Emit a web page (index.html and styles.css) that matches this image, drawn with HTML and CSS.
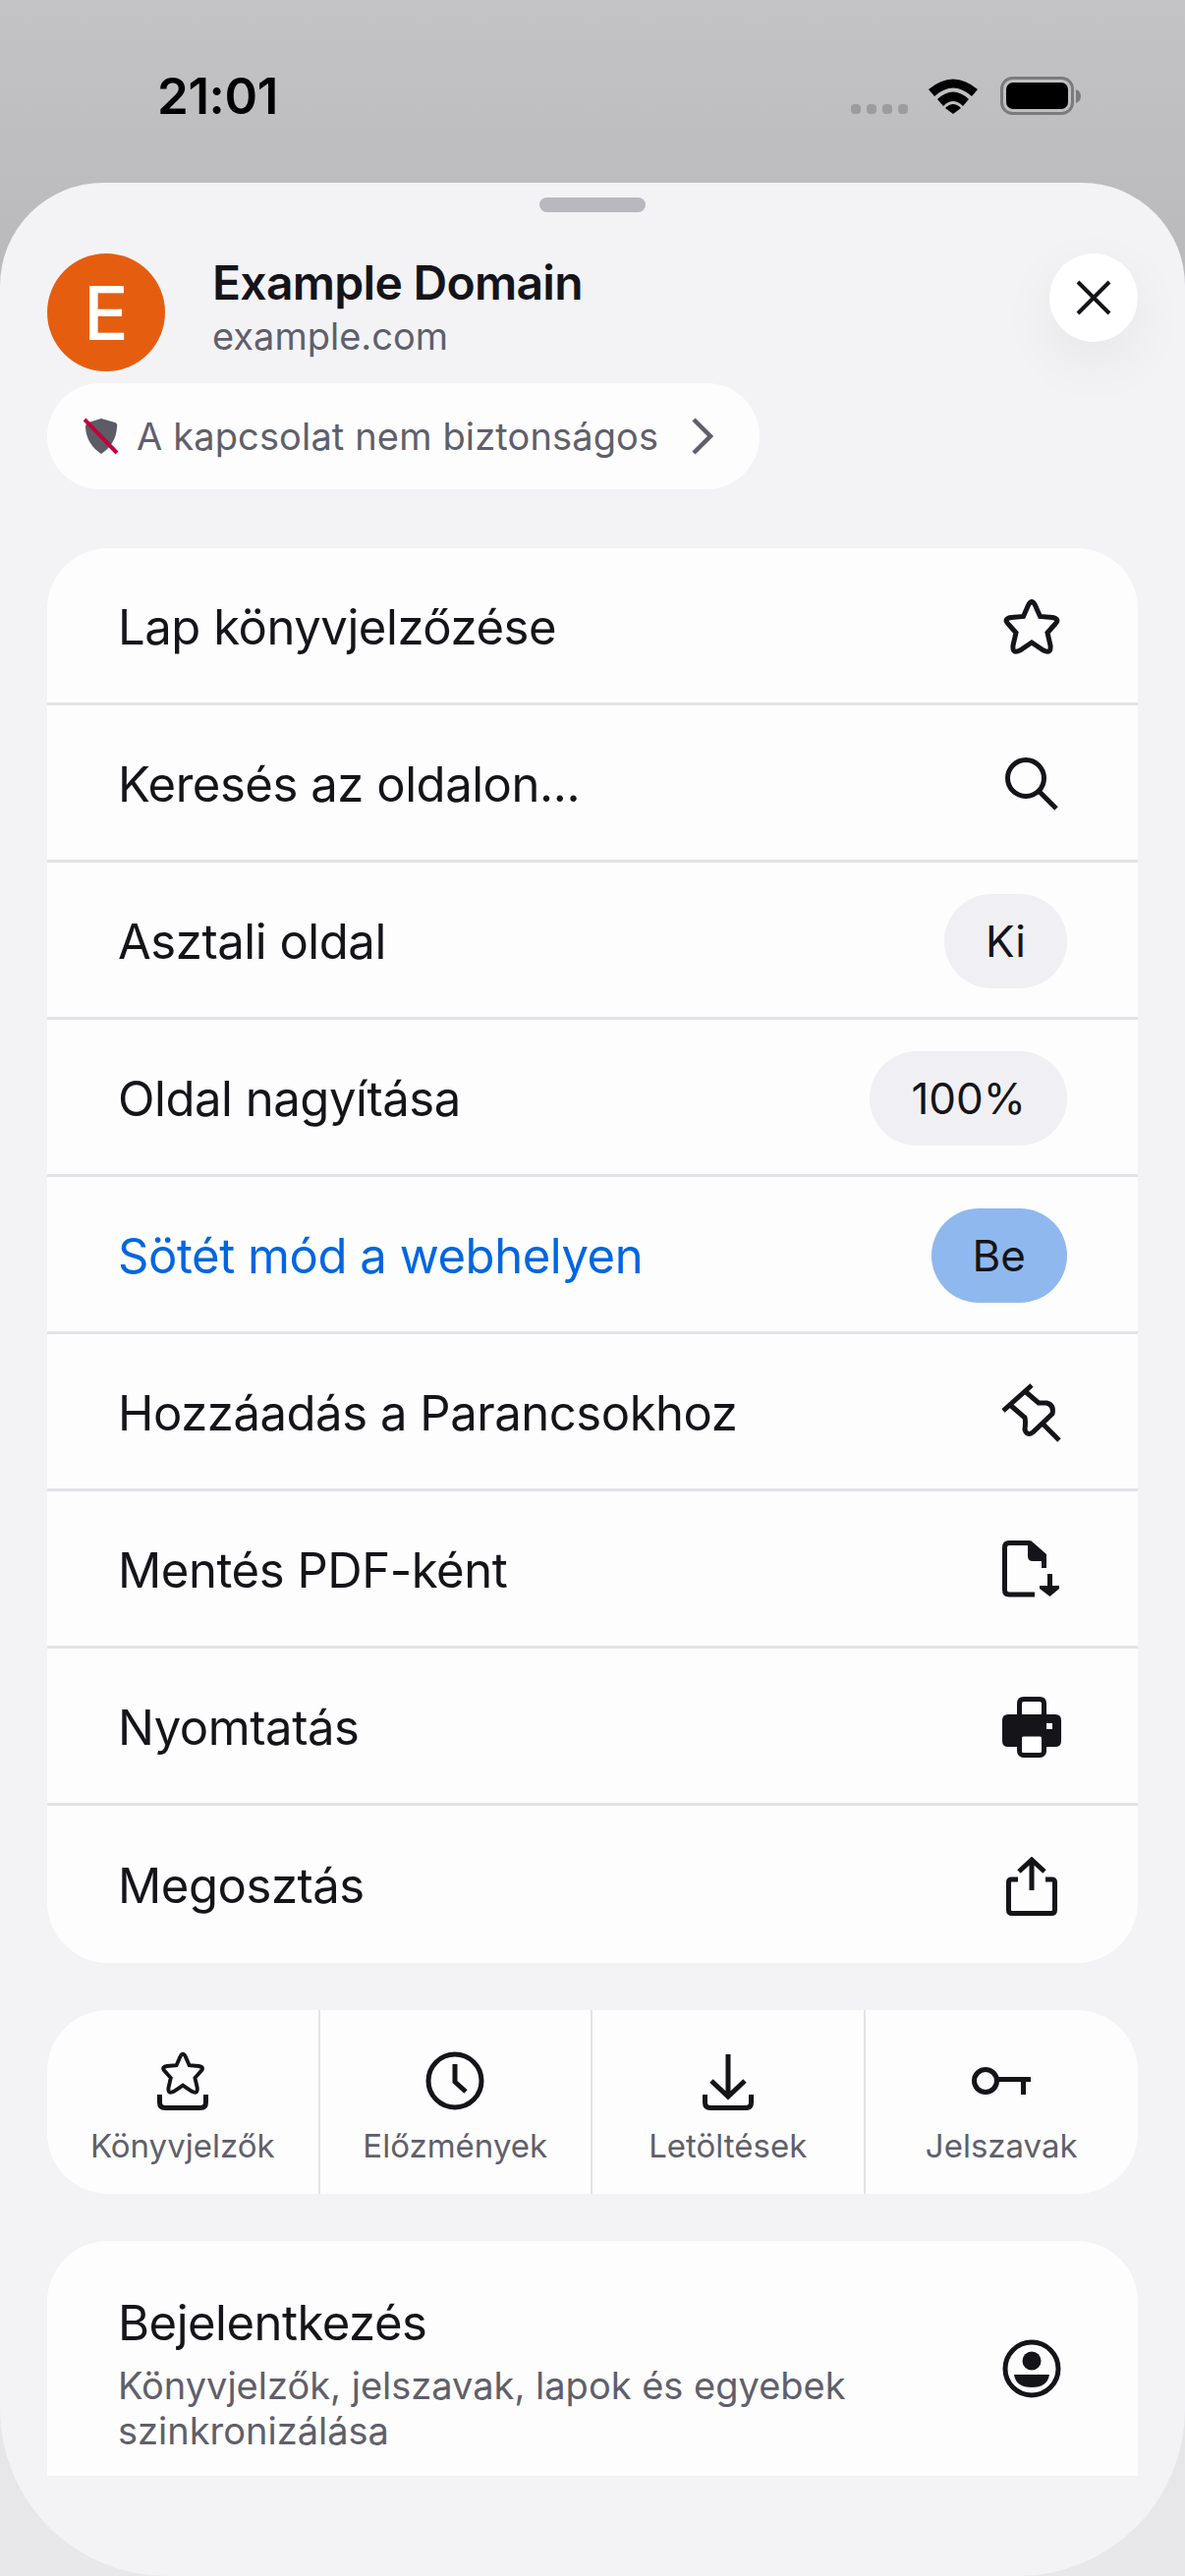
FILE: index.html
```html
<!DOCTYPE html>
<html lang="hu">
<head>
    <meta charset="UTF-8">
    <meta name="viewport" content="width=device-width, initial-scale=1.0">
    <title>Example Domain</title>
    <link rel="stylesheet" href="styles.css">
</head>
<body>
    <div class="status-bar">
        <span class="time">21:01</span>
        <div class="status-icons">
            <div class="signal"><i></i><i></i><i></i><i></i></div>
            <svg class="wifi" width="52" height="38" viewBox="0 0 52 38">
                <path d="M1 13 Q26 -8 51 13 L45 20 Q26 3 7 20 Z" fill="#000"/>
                <path d="M10 23 Q26 8 42 23 L36 30 Q26 20 16 30 Z" fill="#000"/>
                <path d="M18 32 Q26 24 34 32 L26 38 Z" fill="#000"/>
            </svg>
            <svg class="battery" width="82" height="40" viewBox="0 0 82 40">
                <rect x="1.5" y="1.5" width="72" height="36" rx="11" fill="none" stroke="#7b7b7d" stroke-width="3"/>
                <rect x="6" y="6" width="63" height="27" rx="7" fill="#000"/>
                <path d="M77 13 Q82 15 82 20 Q82 25 77 27 Z" fill="#7b7b7d"/>
            </svg>
        </div>
    </div>

    <div class="sheet">
        <div class="handle"></div>

        <div class="site-header">
            <div class="avatar">E</div>
            <div class="site-text">
                <div class="site-title">Example Domain</div>
                <div class="site-url">example.com</div>
            </div>
            <div class="close-btn">
                <svg width="36" height="36" viewBox="0 0 36 36">
                    <path d="M2 2 L34 34 M34 2 L2 34" stroke="#141419" stroke-width="4" fill="none"/>
                </svg>
            </div>
        </div>

        <div class="security-pill">
            <svg class="shield" width="36" height="38" viewBox="0 0 36 38">
                <path d="M18 1 L32 5 Q35 6 34 10 Q33 27 18 37 Q3 27 2 10 Q2 6 5 5 Z" fill="#5c5c66"/>
                <path d="M1 2 L34 36" stroke="#c2003c" stroke-width="4" fill="none"/>
            </svg>
            <span class="security-text">A kapcsolat nem biztonságos</span>
            <svg class="chevron" width="24" height="38" viewBox="0 0 24 38">
                <path d="M3 2 L20 19 L3 36" stroke="#5f5f6b" stroke-width="4.5" fill="none"/>
            </svg>
        </div>

        <div class="card menu">
            <div class="menu-row">
                <span>Lap könyvjelzőzése</span>
                <div class="icon-slot">
                    <svg width="60" height="58" viewBox="0 0 60 58">
                        <path class="line" d="M26.5 7 Q30 0 33.5 7 L38.5 18.5 L51 19.5 Q59 21 54 26 L46 35 L49 48 Q50 57 42 53 L30 45 L18 53 Q10 57 11 48 L14 35 L6 26 Q1 21 9 19.5 L21.5 18.5 Z"/>
                    </svg>
                </div>
            </div>
            <div class="menu-row">
                <span>Keresés az oldalon...</span>
                <div class="icon-slot">
                    <svg width="54" height="54" viewBox="0 0 54 54">
                        <circle class="line" cx="21" cy="21" r="18.5"/>
                        <path class="line" d="M34 34 L52 52"/>
                    </svg>
                </div>
            </div>
            <div class="menu-row">
                <span>Asztali oldal</span>
                <span class="chip">Ki</span>
            </div>
            <div class="menu-row">
                <span>Oldal nagyítása</span>
                <span class="chip">100%</span>
            </div>
            <div class="menu-row active">
                <span>Sötét mód a webhelyen</span>
                <span class="chip chip-on">Be</span>
            </div>
            <div class="menu-row">
                <span>Hozzáadás a Parancsokhoz</span>
                <div class="icon-slot">
                    <svg width="60" height="60" viewBox="0 0 60 60">
                        <path class="line" d="M1 28 L30 2"/>
                        <path class="line" d="M8 22 L23 35 Q24 38 23 47 Q25 54 31 50 L51 31 Q53 22 45 20 L37 20 L23 8"/>
                        <path class="line" d="M40 40 L58 58"/>
                    </svg>
                </div>
            </div>
            <div class="menu-row">
                <span>Mentés PDF-ként</span>
                <div class="icon-slot">
                    <svg width="60" height="60" viewBox="0 0 60 60">
                        <path class="line" d="M33 55 H7 Q2.500 55 2.500 50.500 V7 Q2.500 2.500 7 2.500 H28"/>
                        <path d="M29 0 L45 14 V21 H31 Q26 21 26 16 V2 Z" fill="#141419"/>
                        <path d="M40 20 H45 V28 H40 Z" fill="#141419"/>
                        <path d="M46 34 H51 V46 H58 V49 L48.500 57 L38 49 V46 H46 Z" fill="#141419"/>
                    </svg>
                </div>
            </div>
            <div class="menu-row">
                <span>Nyomtatás</span>
                <div class="icon-slot">
                    <svg width="60" height="62" viewBox="0 0 60 62">
                        <path class="line" d="M17.500 20 V7 Q17.500 2.500 22 2.500 H38 Q42.500 2.500 42.500 7 V20"/>
                        <path d="M6 18 H54 Q60 18 60 24 V45 Q60 51 54 51 H6 Q0 51 0 45 V24 Q0 18 6 18 Z" fill="#141419"/>
                        <rect x="17.500" y="38" width="25" height="21.500" rx="4" fill="#fff" stroke="#141419" stroke-width="5"/>
                        <rect x="45" y="27" width="6" height="6" fill="#fff"/>
                    </svg>
                </div>
            </div>
            <div class="menu-row">
                <span>Megosztás</span>
                <div class="icon-slot">
                    <svg width="52" height="60" viewBox="0 0 52 60">
                        <path class="line" d="M26 3 V34 M13 15 L26 3 L39 15"/>
                        <path class="line" d="M12 23 H5.500 Q2.500 23 2.500 26 V54 Q2.500 57.500 6 57.500 H46 Q49.500 57.500 49.500 54 V26 Q49.500 23 46.500 23 H40"/>
                    </svg>
                </div>
            </div>
        </div>

        <div class="card tabs">
            <div class="tab">
                <svg width="60" height="60" viewBox="0 0 60 60">
                    <path class="line" transform="translate(7 0) scale(.77)" d="M26.5 7 Q30 0 33.5 7 L38.5 18.5 L51 19.5 Q59 21 54 26 L46 35 L49 48 Q50 57 42 53 L30 45 L18 53 Q10 57 11 48 L14 35 L6 26 Q1 21 9 19.5 L21.5 18.5 Z"/>
                    <path class="line" d="M6.500 44 V52 Q6.500 57.500 12 57.500 H48 Q53.500 57.500 53.500 52 V44"/>
                </svg>
                <span>Könyvjelzők</span>
            </div>
            <div class="tab">
                <svg width="60" height="60" viewBox="0 0 60 60">
                    <circle class="line" cx="30" cy="30" r="27"/>
                    <path class="line" d="M30 13 V31 L41 41"/>
                </svg>
                <span>Előzmények</span>
            </div>
            <div class="tab">
                <svg width="60" height="60" viewBox="0 0 60 60">
                    <path class="line" d="M30 3 V46 M13 30 L30 46 L47 30"/>
                    <path class="line" d="M6.500 44 V52 Q6.500 57.500 12 57.500 H48 Q53.500 57.500 53.500 52 V44"/>
                </svg>
                <span>Letöltések</span>
            </div>
            <div class="tab">
                <svg width="60" height="60" viewBox="0 0 60 60">
                    <circle class="line" cx="14" cy="30" r="11.500"/>
                    <path class="line" d="M25 28.500 H60 M52.500 28.500 V44"/>
                </svg>
                <span>Jelszavak</span>
            </div>
        </div>

        <div class="card signin">
            <div class="signin-text">
                <div class="signin-title">Bejelentkezés</div>
                <div class="signin-sub">Könyvjelzők, jelszavak, lapok és egyebek szinkronizálása</div>
            </div>
            <div class="icon-slot">
                <svg width="60" height="60" viewBox="0 0 60 60">
                    <circle class="line" cx="30" cy="30" r="27"/>
                    <circle cx="30" cy="22" r="9.500" fill="#141419"/>
                    <path d="M12 36 H48 Q46 49 30 49 Q14 49 12 36 Z" fill="#141419"/>
                </svg>
            </div>
        </div>
    </div>
</body>
</html>
```
FILE: styles.css
```css
* {
    box-sizing: border-box;
}
body {
    margin: 0;
    width: 1206px;
    height: 2622px;
    overflow: hidden;
    font-family: Inter, "Liberation Sans", sans-serif;
    color: #141419;
    background: linear-gradient(#c3c3c5 0, #b9b9bb 300px, #d8d8da 1500px, #e8e8ea 2622px);
}
.line {
    fill: none;
    stroke: #141419;
    stroke-width: 5;
}

/* status bar */
.status-bar {
    height: 186px;
    padding: 0 106px 0 160px;
    display: flex;
    justify-content: space-between;
    align-items: flex-start;
}
.time {
    margin-top: 68px;
    font-size: 51px;
    line-height: 60px;
    font-weight: 600;
    color: #000;
    letter-spacing: -.4px;
}
.status-icons {
    margin-top: 78px;
    display: flex;
    align-items: flex-start;
}
.signal {
    display: flex;
    gap: 6px;
    margin: 28px 20px 0 0;
}
.signal i {
    width: 10px;
    height: 10px;
    border-radius: 4px;
    background: #9c9c9e;
}
.wifi {
    margin-right: 22px;
}

/* sheet */
.sheet {
    height: 2436px;
    padding: 15px 48px 0;
    background: #f3f3f6;
    border-radius: 105px 105px 170px 170px;
}
.handle {
    width: 108px;
    height: 15px;
    margin: 0 auto 42px;
    border-radius: 8px;
    background: #b8b8be;
}
.site-header {
    display: flex;
    align-items: flex-start;
    height: 120px;
}
.avatar {
    width: 120px;
    height: 120px;
    border-radius: 50%;
    background: #e55e10;
    color: #fff;
    font-size: 76px;
    font-weight: 500;
    line-height: 120px;
    text-align: center;
}
.site-text {
    flex: 1;
    padding-left: 50px;
}
.site-title {
    margin-left: -2px;
    font-size: 48px;
    line-height: 59px;
    font-weight: 600;
    letter-spacing: -.7px;
}
.site-url {
    margin-left: -2px;
    font-size: 38px;
    line-height: 50px;
    color: #5f5f6b;
}
.close-btn {
    width: 90px;
    height: 90px;
    border-radius: 50%;
    background: #fff;
    display: flex;
    align-items: center;
    justify-content: center;
    box-shadow: 0 20px 60px rgba(0, 0, 0, .06);
}
.security-pill {
    width: 725px;
    height: 108px;
    margin-top: 12px;
    padding: 0 46px 0 37px;
    display: flex;
    align-items: center;
    border-radius: 54px;
    background: #fdfdfd;
    color: #5f5f6b;
}
.security-text {
    flex: 1;
    margin-left: 18px;
    font-size: 38px;
    letter-spacing: .14px;
}

/* cards */
.card {
    background: #fdfdfd;
    border-radius: 62px;
}
.menu {
    margin-top: 60px;
}
.menu-row {
    height: 160px;
    padding: 3px 72px 0;
    display: flex;
    align-items: center;
    justify-content: space-between;
    font-size: 49px;
    letter-spacing: -.45px;
    border-bottom: 3px solid #e2e2e8;
}
.menu-row:last-child {
    height: 160px;
    border-bottom: none;
}
.icon-slot {
    width: 72px;
    display: flex;
    justify-content: center;
}
.active {
    color: #0066e0;
}
.chip {
    height: 96px;
    padding: 0 42px;
    display: flex;
    align-items: center;
    justify-content: center;
    border-radius: 48px;
    background: #f0f0f4;
    color: #141419;
    font-size: 44px;
    letter-spacing: 0;
}
.chip-on {
    background: #8fb8ee;
}
.tabs {
    height: 187px;
    margin-top: 48px;
    display: grid;
    grid-template-columns: repeat(4, 1fr);
}
.tab {
    padding-top: 42px;
    display: flex;
    flex-direction: column;
    align-items: center;
    color: #5f5f6b;
    font-size: 33px;
    border-right: 2px solid #e2e2e8;
}
.tab:last-child {
    border-right: none;
}
.tab span {
    margin-top: 16px;
}
.signin {
    height: 239px;
    margin-top: 48px;
    padding: 20px 72px 0;
    display: flex;
    align-items: center;
    justify-content: space-between;
    border-radius: 62px 62px 0 0;
}
.signin-text {
    margin-top: 10px;
}
.signin-title {
    margin-bottom: 10px;
    font-size: 49px;
    line-height: 60px;
    letter-spacing: -.5px;
}
.signin-sub {
    width: 840px;
    font-size: 38px;
    line-height: 46px;
    color: #5f5f6b;
}
```
